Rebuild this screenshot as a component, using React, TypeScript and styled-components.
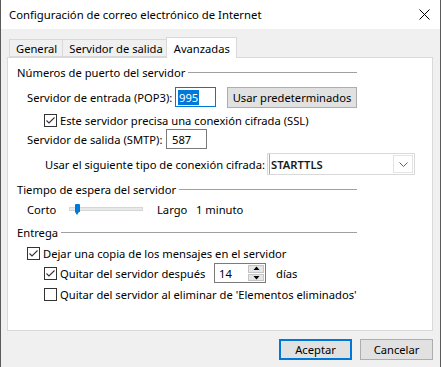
import styled, { createGlobalStyle } from 'styled-components'

const GlobalStyle = createGlobalStyle`
  html, body {
    margin: 0;
    padding: 0;
    background: #f0f0f0;
  }
  body {
    font-family: "Noto Sans", "Liberation Sans", sans-serif;
    font-size: 11.2px;
    color: #000;
  }
`

const WindowSC = styled.div`
  width: 441px;
  height: 367px;
  box-sizing: border-box;
  border-left: 1px solid #5a5a5a;
  border-right: 1px solid #5a5a5a;
  background: #f0f0f0;
  display: flex;
  flex-direction: column;
`

const TitleBarSC = styled.div`
  height: 29px;
  background: #fff;
  display: flex;
  align-items: center;
  justify-content: space-between;
  padding: 0 10px 0 8px;
  font-size: 11.3px;
  white-space: nowrap;
`

const BodySC = styled.div`
  padding: 8px 7px 0 6px;
  display: flex;
  flex-direction: column;
`

const TabStripSC = styled.div`
  display: flex;
  align-items: flex-end;
  height: 20px;
  padding-left: 2px;
  position: relative;
  z-index: 1;
`

const TabSC = styled.div<{ $active?: boolean }>`
  box-sizing: border-box;
  height: ${(p) => (p.$active ? '21px' : '18px')};
  margin: ${(p) => (p.$active ? '0 -2px -1px -2px' : '0')};
  padding: ${(p) => (p.$active ? '0 6px 0 7px' : '0 5px 0 6px')};
  background: ${(p) => (p.$active ? '#fff' : '#f0f0f0')};
  border: 1px solid #d9d9d9;
  border-bottom: ${(p) => (p.$active ? 'none' : '1px solid #d9d9d9')};
  border-right: ${(p) => (p.$active ? '1px solid #d9d9d9' : 'none')};
  display: flex;
  align-items: center;
  white-space: nowrap;
  position: relative;
  z-index: ${(p) => (p.$active ? 2 : 1)};
`

const PanelSC = styled.div`
  box-sizing: border-box;
  height: 274px;
  background: #fff;
  border: 1px solid #d9d9d9;
  padding: 0 0 0 9px;
  display: flex;
  flex-direction: column;
`

const GroupHeaderSC = styled.div<{ $top: number }>`
  width: 340px;
  height: 16px;
  margin-top: ${(p) => p.$top}px;
  display: flex;
  align-items: center;
  gap: 3px;
  white-space: nowrap;
  &::after {
    content: '';
    flex: 1;
    height: 1px;
    background: #a0a0a0;
  }
`

const RowSC = styled.div<{ $top: number; $indent: number; $height?: number }>`
  display: flex;
  align-items: center;
  height: ${(p) => p.$height ?? 16}px;
  margin-top: ${(p) => p.$top}px;
  padding-left: ${(p) => p.$indent}px;
  white-space: nowrap;
`

const LabelSC = styled.span<{ $width?: number }>`
  display: inline-block;
  width: ${(p) => (p.$width ? `${p.$width}px` : 'auto')};
  flex: none;
`

const GapSC = styled.span<{ $width: number }>`
  width: ${(p) => p.$width}px;
  flex: none;
`

const TextBoxSC = styled.div<{ $focused?: boolean; $width: number }>`
  box-sizing: border-box;
  width: ${(p) => p.$width}px;
  height: 20px;
  border: 1px solid ${(p) => (p.$focused ? '#0078d7' : '#7a7a7a')};
  background: #fff;
  display: flex;
  align-items: center;
  padding-left: ${(p) => (p.$focused ? 2 : 5)}px;
`

const SelectedTextSC = styled.span`
  background: #0078d7;
  color: #fff;
  padding: 0 1px;
  line-height: 15px;
`

const ButtonSC = styled.div<{ $default?: boolean; $width: number }>`
  box-sizing: border-box;
  width: ${(p) => p.$width}px;
  height: 21px;
  background: #e1e1e1;
  border: ${(p) => (p.$default ? '2px solid #0078d7' : '1px solid #adadad')};
  display: flex;
  align-items: center;
  justify-content: center;
  white-space: nowrap;
`

const CheckBoxSC = styled.div`
  box-sizing: border-box;
  width: 13px;
  height: 13px;
  border: 1px solid #333;
  background: #fff;
  flex: none;
  margin-right: 3px;
  display: flex;
  align-items: center;
  justify-content: center;
`

const SelectSC = styled.div`
  box-sizing: border-box;
  width: 148px;
  height: 22px;
  border: 1px solid #d9d9d9;
  background: #fff;
  display: flex;
  align-items: center;
  justify-content: space-between;
  padding: 0 1px 0 3px;
  font-weight: 600;
  color: #1a1a1a;
  box-shadow: inset 1px 0 0 #fff, inset 2px 0 0 #7fb6e6;
`

const DropButtonSC = styled.div`
  box-sizing: border-box;
  width: 20px;
  height: 18px;
  border: 1px solid #e3e3e3;
  display: flex;
  align-items: center;
  justify-content: center;
`

const TrackSC = styled.div`
  position: relative;
  box-sizing: border-box;
  width: 74px;
  height: 4px;
  margin: 0 14px 0 0;
  background: #e7eaea;
  border: 1px solid #d6d6d6;
  flex: none;
`

const ThumbSC = styled.div`
  position: absolute;
  left: 5px;
  top: -4px;
  width: 5px;
  height: 8px;
  background: #007ad9;
  border-radius: 1px 1px 0 0;
  &::after {
    content: '';
    position: absolute;
    left: 0;
    top: 8px;
    border-left: 2.5px solid transparent;
    border-right: 2.5px solid transparent;
    border-top: 3px solid #007ad9;
  }
`

const SpinSC = styled.div`
  box-sizing: border-box;
  width: 52px;
  height: 20px;
  border: 1px solid #7a7a7a;
  background: #fff;
  display: flex;
  margin-right: 10px;
`

const SpinValueSC = styled.div`
  flex: 1;
  display: flex;
  align-items: center;
  padding-left: 4px;
`

const SpinButtonsSC = styled.div`
  width: 16px;
  display: flex;
  flex-direction: column;
  gap: 1px;
  padding: 1px 1px 1px 0;
`

const SpinButtonSC = styled.div`
  flex: 1;
  background: #e6e6e6;
  border: 1px solid #c4c4c4;
  display: flex;
  align-items: center;
  justify-content: center;
`

const FooterSC = styled.div`
  display: flex;
  justify-content: flex-end;
  gap: 8px;
  margin-top: 8px;
`

function Check({ checked }: { checked?: boolean }) {
  return (
    <CheckBoxSC>
      {checked && (
        <svg width="11" height="11" viewBox="0 0 11 11">
          <path d="M1.5 5.5 L4 8 L9.5 2.5" fill="none" stroke="#333" strokeWidth="1.1" />
        </svg>
      )}
    </CheckBoxSC>
  )
}

export default function App() {
  return (
    <>
      <GlobalStyle />
      <WindowSC>
        <TitleBarSC>
          <span>Configuración de correo electrónico de Internet</span>
          <svg width="11" height="11" viewBox="0 0 11 11">
            <path d="M0.5 0.5 L10.5 10.5 M10.5 0.5 L0.5 10.5" stroke="#000" strokeWidth="1" />
          </svg>
        </TitleBarSC>
        <BodySC>
          <TabStripSC>
            <TabSC>General</TabSC>
            <TabSC>Servidor de salida</TabSC>
            <TabSC $active>Avanzadas</TabSC>
          </TabStripSC>
          <PanelSC>
            <GroupHeaderSC $top={6}>Números de puerto del servidor</GroupHeaderSC>
            <RowSC $top={7} $indent={10} $height={20}>
              <LabelSC $width={148}>Servidor de entrada (POP3):</LabelSC>
              <TextBoxSC $focused $width={41}>
                <SelectedTextSC>995</SelectedTextSC>
              </TextBoxSC>
              <GapSC $width={11} />
              <ButtonSC $width={130}>Usar predeterminados</ButtonSC>
            </RowSC>
            <RowSC $top={5} $indent={27}>
              <Check checked />
              <span>Este servidor precisa una conexión cifrada (SSL)</span>
            </RowSC>
            <RowSC $top={1} $indent={10} $height={20}>
              <LabelSC $width={139}>Servidor de salida (SMTP):</LabelSC>
              <TextBoxSC $width={41}>587</TextBoxSC>
            </RowSC>
            <RowSC $top={4} $indent={28} $height={22}>
              <LabelSC $width={222}>Usar el siguiente tipo de conexión cifrada:</LabelSC>
              <SelectSC>
                <span>STARTTLS</span>
                <DropButtonSC>
                  <svg width="9" height="5" viewBox="0 0 9 5">
                    <path d="M0.5 0.5 L4.5 4.5 L8.5 0.5" fill="none" stroke="#666" strokeWidth="1" />
                  </svg>
                </DropButtonSC>
              </SelectSC>
            </RowSC>
            <GroupHeaderSC $top={6}>Tiempo de espera del servidor</GroupHeaderSC>
            <RowSC $top={4} $indent={10}>
              <LabelSC $width={42}>Corto</LabelSC>
              <TrackSC>
                <ThumbSC />
              </TrackSC>
              <LabelSC $width={39}>Largo</LabelSC>
              <span>1 minuto</span>
            </RowSC>
            <GroupHeaderSC $top={7}>Entrega</GroupHeaderSC>
            <RowSC $top={5} $indent={10}>
              <Check checked />
              <span>Dejar una copia de los mensajes en el servidor</span>
            </RowSC>
            <RowSC $top={2} $indent={27} $height={20}>
              <Check checked />
              <LabelSC $width={154}>Quitar del servidor después</LabelSC>
              <SpinSC>
                <SpinValueSC>14</SpinValueSC>
                <SpinButtonsSC>
                  <SpinButtonSC>
                    <svg width="7" height="5" viewBox="0 0 7 5">
                      <path d="M3.5 0.5 L6.5 4 L0.5 4 Z" fill="#000" />
                    </svg>
                  </SpinButtonSC>
                  <SpinButtonSC>
                    <svg width="7" height="5" viewBox="0 0 7 5">
                      <path d="M0.5 1 L6.5 1 L3.5 4.5 Z" fill="#000" />
                    </svg>
                  </SpinButtonSC>
                </SpinButtonsSC>
              </SpinSC>
              <span>días</span>
            </RowSC>
            <RowSC $top={3} $indent={27}>
              <Check />
              <span>Quitar del servidor al eliminar de 'Elementos eliminados'</span>
            </RowSC>
          </PanelSC>
          <FooterSC>
            <ButtonSC $default $width={73}>Aceptar</ButtonSC>
            <ButtonSC $width={73}>Cancelar</ButtonSC>
          </FooterSC>
        </BodySC>
      </WindowSC>
    </>
  )
}
